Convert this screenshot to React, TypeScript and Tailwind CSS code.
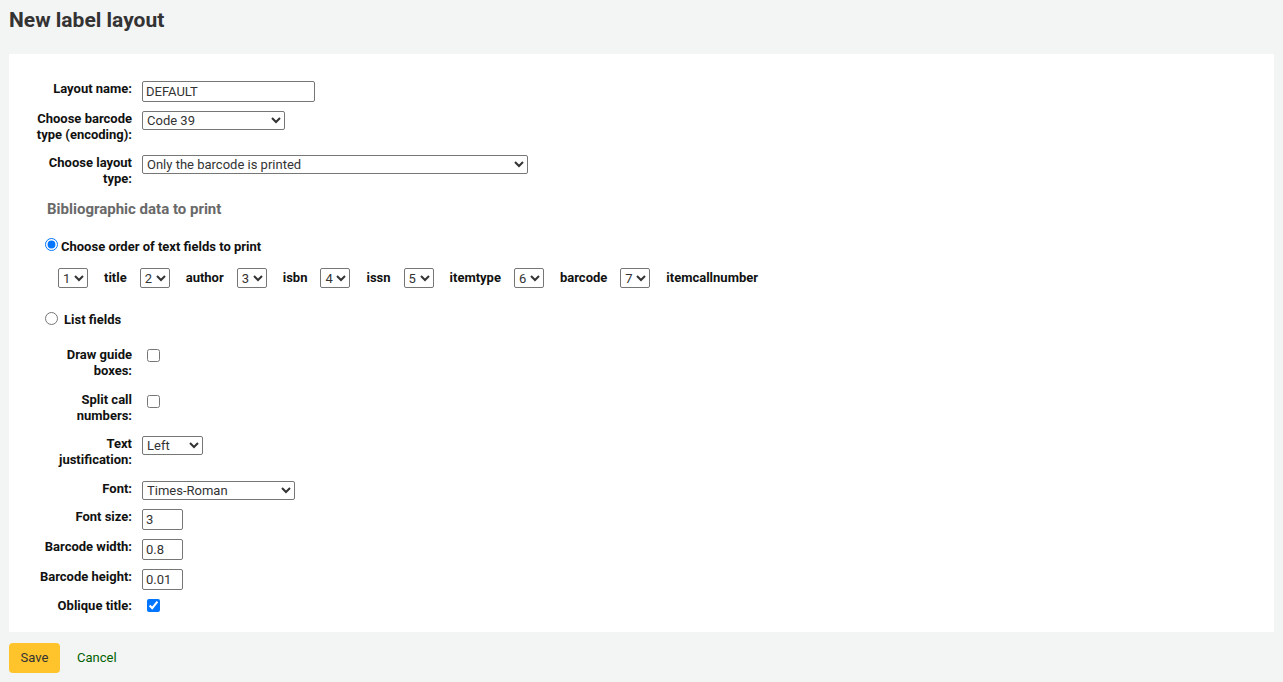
import React from "react";

const labelClass =
  "w-[100px] shrink-0 pt-[1px] text-right font-bold leading-[16px] text-[13px] text-[#111]";
const selectClass =
  "block rounded-[2px] border border-[#767676] bg-white text-[13px] text-[#333] leading-[16px]";
const inputClass =
  "block h-[21px] rounded-[2px] border border-[#767676] bg-white px-[3px] text-[13px] text-[#333]";
const checkClass = "ml-[5px] block h-[13px] w-[13px]";

function Row({
  label,
  h,
  mt = 1,
  children,
}: {
  label: string;
  h: number;
  mt?: number;
  children: React.ReactNode;
}) {
  return (
    <div className="flex items-start" style={{ height: h }}>
      <label className={labelClass}>{label}</label>
      <div className="ml-[10px] flex" style={{ marginTop: mt }}>
        {children}
      </div>
    </div>
  );
}

const FIELDS = ["title", "author", "isbn", "issn", "itemtype", "barcode", "itemcallnumber"];

export default function App() {
  return (
    <div
      className="min-h-[682px] bg-[#f3f4f4] text-[#333]"
      style={{ fontFamily: "Roboto, 'Liberation Sans', sans-serif" }}
    >
      <h1 className="px-[9px] pt-[8px] text-[21px] font-bold leading-[24px] text-[#333]">
        New label layout
      </h1>

      <div className="mx-[9px] mt-[22px] h-[578px] bg-white pl-[23px] pt-[26px]">
        <Row label="Layout name:" h={30}>
          <input className={`${inputClass} w-[173px]`} defaultValue="DEFAULT" />
        </Row>
        <Row label="Choose barcode type (encoding):" h={44}>
          <select className={`${selectClass} h-[19px] w-[143px]`} defaultValue="c39">
            <option value="c39">Code 39</option>
          </select>
        </Row>
        <Row label="Choose layout type:" h={45}>
          <select className={`${selectClass} h-[19px] w-[386px]`} defaultValue="b">
            <option value="b">Only the barcode is printed</option>
          </select>
        </Row>

        <div className="h-[37px]">
          <h3 className="ml-[15px] text-[15px] font-bold leading-[20px] text-[#696969]">
            Bibliographic data to print
          </h3>
        </div>

        <div className="ml-[13px] flex h-[30px] items-start">
          <input type="radio" name="mode" defaultChecked className="mt-[2px] block h-[13px] w-[13px]" />
          <span className="ml-[3px] pt-[1px] text-[13px] font-bold leading-[20px] text-[#111]">
            Choose order of text fields to print
          </span>
        </div>

        <div className="ml-[26px] flex h-[43px] items-start">
          {FIELDS.map((f, i) => (
            <div key={f} className="mt-[2px] flex items-center">
              <select className={`${selectClass} h-[20px] w-[30px]`} defaultValue={String(i + 1)}>
                {FIELDS.map((_, j) => (
                  <option key={j} value={String(j + 1)}>
                    {j + 1}
                  </option>
                ))}
              </select>
              <span className="ml-[16px] mr-[13px] text-[13px] font-bold text-[#111]">{f}</span>
            </div>
          ))}
        </div>

        <div className="ml-[13px] flex h-[37px] items-start">
          <input type="radio" name="mode" className="mt-[3px] block h-[13px] w-[13px]" />
          <span className="ml-[6px] pt-[1px] text-[13px] font-bold leading-[20px] text-[#111]">
            List fields
          </span>
        </div>

        <Row label="Draw guide boxes:" h={45} mt={3}>
          <input type="checkbox" className={checkClass} />
        </Row>
        <Row label="Split call numbers:" h={44} mt={4}>
          <input type="checkbox" className={checkClass} />
        </Row>
        <Row label="Text justification:" h={45}>
          <select className={`${selectClass} h-[19px] w-[61px]`} defaultValue="L">
            <option value="L">Left</option>
          </select>
        </Row>
        <Row label="Font:" h={28}>
          <select className={`${selectClass} h-[19px] w-[153px]`} defaultValue="TR">
            <option value="TR">Times-Roman</option>
          </select>
        </Row>
        <Row label="Font size:" h={30}>
          <input className={`${inputClass} w-[41px]`} defaultValue="3" />
        </Row>
        <Row label="Barcode width:" h={30}>
          <input className={`${inputClass} w-[41px]`} defaultValue="0.8" />
        </Row>
        <Row label="Barcode height:" h={29}>
          <input className={`${inputClass} w-[41px]`} defaultValue="0.01" />
        </Row>
        <Row label="Oblique title:" h={35} mt={2}>
          <input type="checkbox" defaultChecked className={checkClass} />
        </Row>
      </div>

      <div className="mt-[11px] flex items-center px-[9px]">
        <button className="h-[30px] w-[51px] rounded-[4px] bg-[#ffc32b] text-[13px] text-[#333]">
          Save
        </button>
        <a className="ml-[17px] text-[13px] text-[#006100]" href="#">
          Cancel
        </a>
      </div>
    </div>
  );
}
